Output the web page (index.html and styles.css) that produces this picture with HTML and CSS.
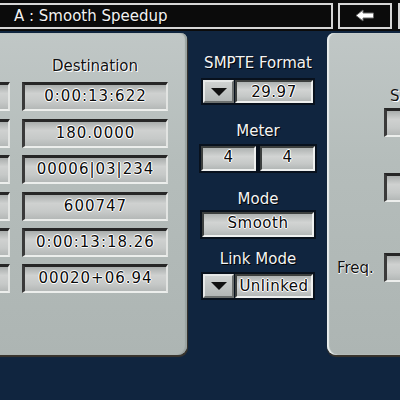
FILE: index.html
```html
<!DOCTYPE html>
<html lang="en">

<head>
  <meta charset="UTF-8">
  <meta name="viewport" content="width=device-width, initial-scale=1.0">
  <title>Smooth Speedup</title>
  <link rel="stylesheet" href="styles.css">
</head>

<body>

  <div class="screen">
    <!-- top title strip -->
    <div class="topbar">
      <div class="title-box">A : Smooth Speedup</div>
      <div class="bar-btn">
        <svg width="20" height="13" viewBox="0 0 20 13">
          <path d="M1 6.5 L8 1 L8 4 L18.5 4 L18.5 9 L8 9 L8 12 Z" fill="#fff" stroke="#666" stroke-width="1" />
        </svg>
      </div>
      <div class="bar-btn next"></div>
    </div>

    <div class="main">
      <!-- source / destination values (source column is scrolled out of view) -->
      <div class="panel left">
        <div class="value-grid">
          <div class="head"></div>
          <div class="head">Destination</div>

          <div class="field"></div>
          <div class="field">0:00:13:622</div>
          <div class="field"></div>
          <div class="field">180.0000</div>
          <div class="field"></div>
          <div class="field">00006|03|234</div>
          <div class="field"></div>
          <div class="field">600747</div>
          <div class="field"></div>
          <div class="field">0:00:13:18.26</div>
          <div class="field"></div>
          <div class="field">00020+06.94</div>
        </div>
      </div>

      <!-- format settings -->
      <div class="center">
        <div class="c-label">SMPTE Format</div>
        <div class="dropdown smpte">
          <div class="drop-btn"><span class="tri"></span></div>
          <div class="drop-value">29.97</div>
        </div>

        <div class="c-label meter-label">Meter</div>
        <div class="meter">
          <div class="box">4</div>
          <div class="box">4</div>
        </div>

        <div class="c-label mode-label">Mode</div>
        <div class="box wide">Smooth</div>

        <div class="c-label link-label">Link Mode</div>
        <div class="dropdown link">
          <div class="drop-btn"><span class="tri"></span></div>
          <div class="drop-value">Unlinked</div>
        </div>
      </div>

      <!-- sample rate panel -->
      <div class="panel right">
        <div class="r-label">S</div>
        <div class="r-row"><span class="r-name"></span><div class="field small"></div></div>
        <div class="r-label second"></div>
        <div class="r-row two"><span class="r-name"></span><div class="field small"></div></div>
        <div class="r-row freq"><span class="r-name">Freq.</span><div class="field small"></div></div>
      </div>
    </div>
  </div>

</body>

</html>
```

FILE: styles.css
```css
* {
  margin: 0;
  padding: 0;
  box-sizing: border-box;
}

body {
  background-color: #10253f;
  font-family: "DejaVu Sans", Verdana, sans-serif;
  font-size: 15px;
  overflow: hidden;
}

.screen {
  width: 400px;
  height: 400px;
  overflow: hidden;
}

/* top strip */
.topbar {
  display: flex;
  align-items: center;
  height: 31px;
  background-color: #0b0b0b;
  margin-bottom: 2px;
}

.title-box {
  flex: none;
  width: 337px;
  height: 26px;
  margin-left: -4px;
  border: 2px solid #d6d6d6;
  padding-left: 16px;
  color: #f2f2f2;
  line-height: 22px;
  text-shadow: 1px 1px 0 #000;
}

.bar-btn {
  flex: none;
  display: flex;
  align-items: center;
  justify-content: center;
  width: 54px;
  height: 26px;
  margin-left: 5px;
  border: 2px solid #d6d6d6;
}

.bar-btn.next {
  margin-left: 6px;
}

.main {
  display: flex;
  align-items: flex-start;
}

/* grey panels */
.panel {
  flex: none;
  height: 322px;
  background: linear-gradient(180deg, #c0c7c6 0%, #b5bdbb 40%, #adb5b3 100%);
}

.left {
  width: 323px;
  margin-left: -136px;
  padding: 24px 19px 0 0;
  border-radius: 0 6px 9px 0;
  box-shadow: 1px 2px 1px #3a352d, inset -2px 0 1px #9aa3a1;
}

.value-grid {
  display: grid;
  grid-template-columns: 146px 146px;
  grid-template-rows: 18px repeat(6, 29px);
  column-gap: 12px;
  row-gap: 7.4px;
}

.head {
  text-align: center;
  line-height: 18px;
  color: #111;
  text-shadow: 1px 1px 0 #fff, -1px 0 0 #e8e8e8;
}

.field {
  height: 29px;
  border-style: solid;
  border-width: 3px 2px 2px 3px;
  border-color: #262626 #e2e4e2 #eceeec #3a3a3a;
  background: linear-gradient(180deg, #a9adac 0%, #cfd1d0 35%, #c6c9c8 70%, #b4b8b7 100%);
  text-align: center;
  line-height: 23px;
  letter-spacing: 1px;
  color: #0a0a0a;
  text-shadow: 1px 0 0 #fff, -1px 0 0 #fff, 0 1px 0 #fff, 0 -1px 0 #fff;
}

/* middle column */
.center {
  flex: none;
  width: 140px;
  display: flex;
  flex-direction: column;
  align-items: center;
  padding-top: 21px;
  padding-left: 2px;
}

.c-label {
  line-height: 18px;
  color: #f4f4f4;
  text-shadow: 1px 1px 0 #000;
}

.dropdown {
  display: flex;
  width: 114px;
  border: 2px solid #08111d;
  background-color: #08111d;
}

.smpte {
  height: 27px;
  margin-top: 6px;
}

.link {
  height: 28px;
  margin-top: 4px;
}

.drop-btn {
  width: 31px;
  display: flex;
  align-items: center;
  justify-content: center;
  border-style: solid;
  border-width: 2px;
  border-color: #e6e8e7 #6d7170 #6d7170 #e6e8e7;
  background: linear-gradient(180deg, #cfd2d1, #b3b7b6);
}

.tri {
  width: 0;
  height: 0;
  border-left: 8px solid transparent;
  border-right: 8px solid transparent;
  border-top: 8px solid #111;
}

.drop-value,
.box {
  border-style: solid;
  border-width: 2px;
  border-color: #3c3f3e #eef0ef #eef0ef #3c3f3e;
  background: linear-gradient(180deg, #aeb2b1 0%, #d2d4d3 40%, #c5c8c7 75%, #b3b7b6 100%);
  text-align: center;
  color: #0a0a0a;
  letter-spacing: 0.5px;
  text-shadow: 1px 0 0 #fff, -1px 0 0 #fff, 0 1px 0 #fff, 0 -1px 0 #fff;
}

.drop-value {
  flex: 1;
  margin-left: 1px;
  line-height: 20px;
}

.meter-label {
  margin-top: 17px;
}

.meter {
  display: flex;
  gap: 4px;
  margin-top: 6px;
}

.box {
  width: 55px;
  height: 25px;
  line-height: 19px;
  outline: 2px solid #08111d;
}

.mode-label {
  margin-top: 19px;
}

.box.wide {
  width: 112px;
  margin-top: 4px;
}

.link-label {
  margin-top: 13px;
}

/* right panel */
.right {
  width: 200px;
  padding: 54px 0 0 10px;
  border-radius: 7px 0 0 9px;
  box-shadow: 0 2px 1px #3a352d, inset 2px 0 1px #e9eeed;
}

.r-label {
  height: 18px;
  margin-left: 47px;
  padding-left: 6px;
  line-height: 18px;
  color: #111;
  text-shadow: 1px 1px 0 #fff;
}

.r-label.second {
  margin-top: 14px;
}

.r-row {
  display: flex;
  align-items: center;
  margin-top: 3px;
}

.r-row.two {
  margin-top: 4px;
}

.r-row.freq {
  margin-top: 51px;
}

.r-name {
  width: 47px;
  color: #111;
  text-shadow: 1px 0 0 #fff, 0 1px 0 #fff;
}

.field.small {
  width: 110px;
}
```
